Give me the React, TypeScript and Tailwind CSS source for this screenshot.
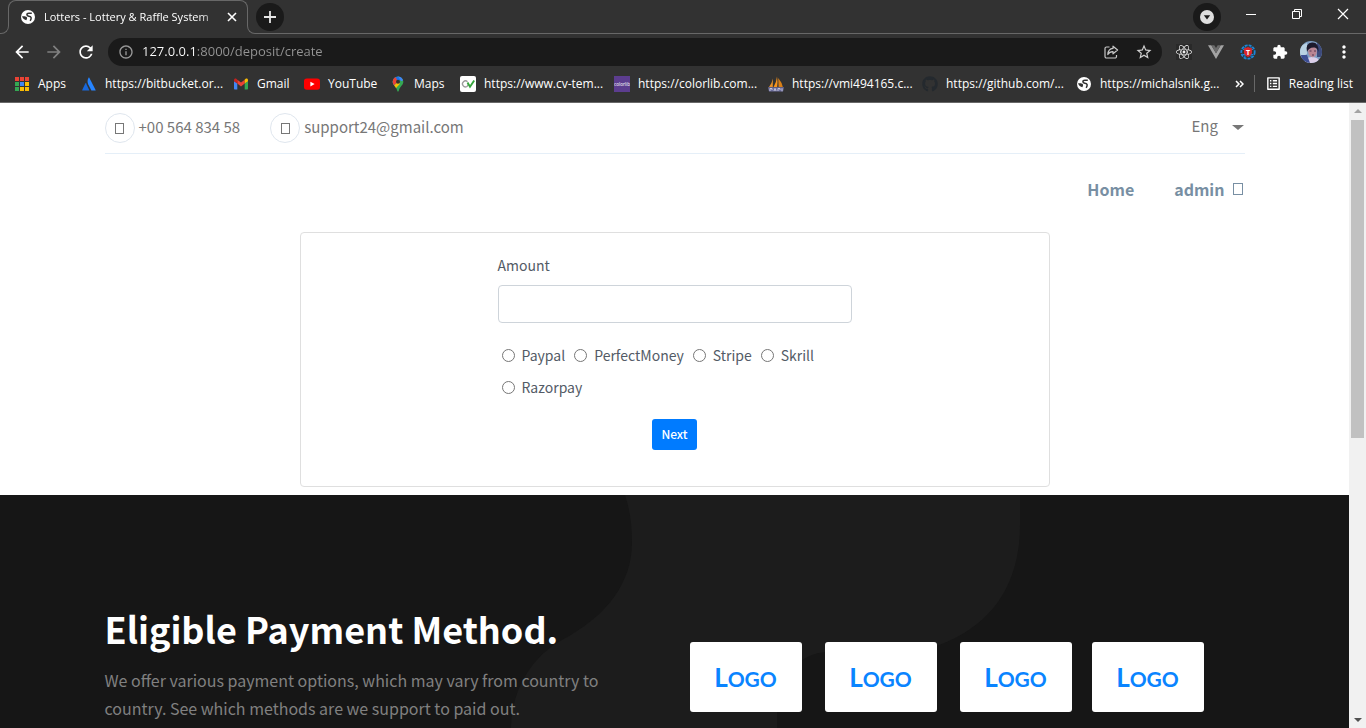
import type { ReactNode } from "react";
import {
  MdArrowBack,
  MdArrowForward,
  MdExtension,
  MdInfoOutline,
  MdListAlt,
  MdMoreVert,
  MdRefresh,
  MdStarBorder,
} from "react-icons/md";
import { FaGithub, FaReact } from "react-icons/fa";

function GlobeIcon() {
  return (
    <svg viewBox="0 0 16 16" className="size-4 shrink-0" aria-hidden="true">
      <circle cx="8" cy="8" r="7" fill="#fff" />
      <path
        d="M11.800 4.200H8.800C6.200 4.200 6.400 7 8.800 7.200S12 9 10.200 11.800"
        fill="none"
        stroke="#323232"
        strokeWidth="1.500"
      />
      <path d="M2 7.300H4.600C7.300 7.600 7.600 9 6.400 11.200 4.600 11 2.600 9.600 2 7.300Z" fill="#323232" />
    </svg>
  );
}

function AppsIcon() {
  const colors = ["#ea4335", "#ea4335", "#ea4335", "#34a853", "#4285f4", "#fbbc04", "#34a853", "#fbbc04", "#fbbc04"];
  return (
    <svg viewBox="0 0 16 16" className="size-4 shrink-0" aria-hidden="true">
      {colors.map((c, i) => (
        <rect key={i} x={1 + (i % 3) * 5} y={1 + Math.floor(i / 3) * 5} width="4" height="4" fill={c} />
      ))}
    </svg>
  );
}

function AtlassianIcon() {
  return (
    <svg viewBox="0 0 16 16" className="size-4 shrink-0" aria-hidden="true">
      <path d="M5 7.200 8.400 14.600H1.500Q1 14.600 1.200 14.100L4.300 7.400Q4.700 6.800 5 7.200Z" fill="#1868db" />
      <path d="M7.700 1.600Q8 1.200 8.300 1.700L14.600 14Q14.900 14.600 14.300 14.600H10.400L7.300 8.500Q5.600 5 7.700 1.600Z" fill="#2684ff" />
    </svg>
  );
}

function GmailIcon() {
  return (
    <svg viewBox="0 0 16 16" className="size-4 shrink-0" aria-hidden="true">
      <path d="M1 5v7.500c0 .6.4 1 1 1h2.300V7.500Z" fill="#4285f4" />
      <path d="M15 5v7.500c0 .6-.4 1-1 1h-2.300V7.500Z" fill="#34a853" />
      <path d="M4.300 3.700 8 6.500l3.700-2.800v3.900L8 10.400 4.300 7.600Z" fill="#ea4335" />
      <path d="M1 4.200c0-1.600 1.500-2 2.600-1.200l.7.700v3.900L1 5.200Z" fill="#c5221f" />
      <path d="M15 4.200c0-1.600-1.500-2-2.600-1.200l-.7.700v3.900L15 5.200Z" fill="#fbbc04" />
    </svg>
  );
}

function YouTubeIcon() {
  return (
    <svg viewBox="0 0 16 16" className="size-4 shrink-0" aria-hidden="true">
      <rect x="0" y="2.400" width="16" height="11.400" rx="2.800" fill="#f00" />
      <path d="M6.400 5.700v4.800L10.600 8.100Z" fill="#fff" />
    </svg>
  );
}

function MapsIcon() {
  return (
    <svg viewBox="0 0 16 16" className="size-4 shrink-0" aria-hidden="true">
      <defs>
        <clipPath id="pin">
          <path d="M8 .5a5.300 5.300 0 0 0-5.300 5.300c0 3.400 3.300 4.700 4.300 8.200.3 1 .6 1.700 1 1.700s.7-.7 1-1.700c1-3.500 4.300-4.800 4.300-8.200A5.300 5.300 0 0 0 8 .5Z" />
        </clipPath>
      </defs>
      <g clipPath="url(#pin)">
        <rect width="16" height="16" fill="#34a853" />
        <path d="M0 13 14 0H0Z" fill="#1a73e8" />
        <path d="M0 0h5L8 5.800 2 11Z" fill="#ea4335" />
        <path d="M2 11.500 8 5.800l2 2-5.500 6Z" fill="#fbbc04" />
        <path d="M8 0h8v3l-5 2.200Z" fill="#4285f4" />
      </g>
      <circle cx="8" cy="5.800" r="2" fill="#323232" />
    </svg>
  );
}

function CvIcon() {
  return (
    <svg viewBox="0 0 16 16" className="size-4 shrink-0" aria-hidden="true">
      <rect width="16" height="16" rx="2" fill="#fff" />
      <path d="M7.500 5.700A3 3 0 1 0 7 10.500L8.500 8" fill="none" stroke="#9a9a9a" strokeWidth="1.300" />
      <path d="M7.500 6.500 10 10.800 14.200 4.500" fill="none" stroke="#35a53c" strokeWidth="1.900" />
    </svg>
  );
}

function ColorlibIcon() {
  return (
    <svg viewBox="0 0 16 16" className="size-4 shrink-0" aria-hidden="true">
      <rect width="16" height="16" fill="#5c3d8f" />
      <text x="8" y="9.500" textAnchor="middle" fontSize="4.600" fontFamily="Open Sans, sans-serif" fill="#fff">
        colorlib
      </text>
    </svg>
  );
}

function SailIcon() {
  return (
    <svg viewBox="0 0 16 16" className="size-4 shrink-0" aria-hidden="true">
      <path d="M4.800 2.500V11H1Q4 7.500 4.800 2.500Z" fill="#e8922a" />
      <path d="M9 .5Q10 6 9.200 11H5.600Q8.500 6 9 .5Z" fill="#f7941d" />
      <path d="M10.200 2Q14 6.500 14.800 11H10.600Z" fill="#d97f16" />
      <path d="M0 11.300H16L15 15.500H1Z" fill="#6c6d9c" />
      <path d="M2 15v-2.500h2V14m2 1 1-2.700L8 15m2 0v-2.500h2V14m2-1.700v3" fill="none" stroke="#d4d4e4" strokeWidth=".8" />
    </svg>
  );
}

function ShareIcon() {
  return (
    <svg viewBox="0 0 16 16" className="size-4 shrink-0" aria-hidden="true" fill="none" stroke="#c9c9c9" strokeWidth="1.200" strokeLinejoin="round">
      <path d="M6.500 3H3.500A1.500 1.500 0 0 0 2 4.500v8A1.500 1.500 0 0 0 3.500 14h8.500a1.500 1.500 0 0 0 1.500-1.500V11" />
      <path d="M10 2.200 14.600 6 10 9.800V7.600C7.500 7.500 6 8.500 4.800 10.500 5 7.300 6.700 4.700 10 4.400Z" />
    </svg>
  );
}

function VueIcon() {
  return (
    <svg viewBox="0 0 16 16" className="size-4 shrink-0" aria-hidden="true">
      <path d="M0 1.200h3.300L8 9.300l4.700-8.100H16L8 15Z" fill="#a3a3a3" />
      <path d="M3.300 1.200h3L8 4l1.700-2.800h3L8 9.300Z" fill="#6b6b6b" />
    </svg>
  );
}

function TranslateIcon() {
  return (
    <svg viewBox="0 0 16 16" className="size-4 shrink-0" aria-hidden="true">
      <circle cx="8" cy="8" r="6.700" fill="none" stroke="#1b86d8" strokeWidth="1.800" strokeDasharray="3 1" />
      <path d="M3 5.500h10M3 10.500h10M5 3v10M11 3v10" stroke="#1b86d8" strokeWidth="1" />
      <path d="M4 4.500 8 3l4 1.500v4Q11.500 11.500 8 13 4.500 11.500 4 8.500Z" fill="#d9262c" />
      <text x="8" y="10.600" textAnchor="middle" fontSize="7" fontWeight="700" fontFamily="Open Sans, sans-serif" fill="#fff">
        T
      </text>
    </svg>
  );
}

function Avatar() {
  return (
    <svg viewBox="0 0 22 22" className="size-[22px] shrink-0" aria-hidden="true">
      <defs>
        <clipPath id="face">
          <circle cx="11" cy="11" r="11" />
        </clipPath>
      </defs>
      <g clipPath="url(#face)">
        <rect width="22" height="22" fill="#7f9fc4" />
        <path d="M0 5 7 2v11l-7 4Z" fill="#b8d1e2" />
        <path d="M17 2h5v14h-5Z" fill="#3d4a7c" />
        <path d="M4 22q1-6 8-6t8 6Z" fill="#dccfe8" />
        <path d="M1 14l6 0 3 8H2Z" fill="#3e4f94" />
        <ellipse cx="12.500" cy="10.500" rx="4.300" ry="5.800" fill="#b98593" />
        <path d="M7 11Q5 2 12 1.500T18.500 11q-1-4-4-4.500Q9 6 7 11Z" fill="#1d1a2d" />
        <path d="M9.500 10h2m2.500 0h2m-4 4h2" stroke="#472f4b" strokeWidth=".9" />
      </g>
    </svg>
  );
}

function Bookmark({ icon, label, width }: { icon: ReactNode; label: string; width: string }) {
  return (
    <a href="#" className={`flex shrink-0 items-center gap-2 whitespace-nowrap ${width}`}>
      {icon}
      <span>{label}</span>
    </a>
  );
}

const bookmarks: { icon: ReactNode; label: string; width: string }[] = [
  { icon: <AppsIcon />, label: "Apps", width: "w-[51px]" },
  { icon: <AtlassianIcon />, label: "https://bitbucket.or...", width: "w-[136px]" },
  { icon: <GmailIcon />, label: "Gmail", width: "w-[55px]" },
  { icon: <YouTubeIcon />, label: "YouTube", width: "w-[70px]" },
  { icon: <MapsIcon />, label: "Maps", width: "w-[54px]" },
  { icon: <CvIcon />, label: "https://www.cv-tem...", width: "w-[138px]" },
  { icon: <ColorlibIcon />, label: "https://colorlib.com...", width: "w-[138px]" },
  { icon: <SailIcon />, label: "https://vmi494165.c...", width: "w-[138px]" },
  { icon: <FaGithub className="size-4 shrink-0 text-[#24292e]" />, label: "https://github.com/...", width: "w-[138px]" },
  { icon: <GlobeIcon />, label: "https://michalsnik.g...", width: "w-[138px]" },
];

function TabStrip() {
  return (
    <div className="flex h-[34px] items-start">
      <div className="-mr-px h-2 w-[9px] self-end rounded-br-lg border-r border-b border-[#686868]" />
      <div className="flex h-[26px] w-60 items-center gap-2 rounded-t-lg border border-b-0 border-[#686868] pt-[7px] pr-[7px] pl-[11px]">
        <GlobeIcon />
        <span className="flex-1 text-[11px] whitespace-nowrap [mask-image:linear-gradient(to_right,#000_90%,#0006)]">
          Lotters - Lottery &amp; Raffle System
        </span>
        <button aria-label="Close tab" className="flex size-4 items-center justify-center">
          <svg viewBox="0 0 10 10" className="size-[10px]" aria-hidden="true">
            <path d="m1 1 8 8M9 1 1 9" stroke="#fff" strokeWidth="1.600" />
          </svg>
        </button>
      </div>
      <div className="-ml-px h-2 w-[9px] self-end rounded-bl-lg border-b border-l border-[#686868]" />
      <div className="flex h-full flex-1 items-center border-b border-[#686868]">
        <button aria-label="New tab" className="flex size-7 items-center justify-center rounded-full bg-[#1a1a1a]">
          <svg viewBox="0 0 12 12" className="size-3" aria-hidden="true">
            <path d="M6 0v12M0 6h12" stroke="#e6e6e6" strokeWidth="1.800" />
          </svg>
        </button>
        <button aria-label="Search tabs" className="mr-5 ml-auto flex size-7 items-center justify-center rounded-full bg-[#1a1a1a]">
          <svg viewBox="0 0 14 14" className="size-[14px]" aria-hidden="true">
            <circle cx="7" cy="7" r="7" fill="#dedede" />
            <path d="M3.800 5.200h6.400L7 9.600Z" fill="#1a1a1a" />
          </svg>
        </button>
        <div className="flex h-7 items-center pb-[5px]">
          <button aria-label="Minimize" className="flex w-[46px] items-center justify-start pl-1">
            <svg viewBox="0 0 12 12" className="size-3" aria-hidden="true">
              <path d="M1 6.500h10" stroke="#fff" />
            </svg>
          </button>
          <button aria-label="Restore" className="flex w-[46px] items-center justify-start pl-1">
            <svg viewBox="0 0 12 12" className="size-3" fill="none" stroke="#fff" aria-hidden="true">
              <path d="M1.500 3.500h7v7h-7ZM3.500 3.500v-2h7v7h-2" />
            </svg>
          </button>
          <button aria-label="Close" className="flex w-[33px] items-center justify-start pl-1">
            <svg viewBox="0 0 12 12" className="size-3" aria-hidden="true">
              <path d="m1 1 10 10M11 1 1 11" stroke="#fff" strokeWidth="1.200" />
            </svg>
          </button>
        </div>
      </div>
    </div>
  );
}

function Toolbar() {
  return (
    <div className="flex h-9 items-center pr-3 pl-3">
      <div className="flex w-24 items-center gap-3">
        <button aria-label="Back"><MdArrowBack className="size-5 text-white" /></button>
        <button aria-label="Forward"><MdArrowForward className="size-5 text-[#808080]" /></button>
        <button aria-label="Reload"><MdRefresh className="size-5 text-white" /></button>
      </div>
      <div className="flex h-7 flex-1 items-center rounded-full bg-[#1a1a1a] pr-[9px] pl-[10px]">
        <MdInfoOutline className="size-4 shrink-0 text-[#9a9a9a]" />
        <input
          aria-label="Address"
          defaultValue="127.0.0.1:8000/deposit/create"
          className="ml-2 min-w-0 flex-1 bg-[linear-gradient(90deg,#fff_55px,#959595_55px)] bg-clip-text text-[13px] text-transparent outline-none"
        />
        <button aria-label="Share" className="mr-4"><ShareIcon /></button>
        <button aria-label="Bookmark"><MdStarBorder className="size-[18px] text-[#d0d0d0]" /></button>
      </div>
      <div className="flex items-center gap-4 pl-[14px]">
        <FaReact className="size-4 bg-[#292929] text-[#f0f0f0]" />
        <VueIcon />
        <TranslateIcon />
        <MdExtension className="size-4 text-white" />
      </div>
      <div className="flex items-center gap-3 pl-3">
        <Avatar />
        <button aria-label="Menu"><MdMoreVert className="size-5 text-white" /></button>
      </div>
    </div>
  );
}

function BookmarkBar() {
  return (
    <nav className="flex h-[33px] items-center border-b border-[#686868] pr-[13px] pb-[5px] pl-[14px]">
      <div className="flex min-w-0 flex-1 items-center gap-4 overflow-hidden">
        {bookmarks.map((b) => (
          <Bookmark key={b.label} {...b} />
        ))}
      </div>
      <button aria-label="More bookmarks" className="mr-[10px]">
        <svg viewBox="0 0 9 8" className="h-2 w-[9px]" fill="none" stroke="#fff" strokeWidth="1.500" aria-hidden="true">
          <path d="m1 1 3 3-3 3M5 1l3 3-3 3" />
        </svg>
      </button>
      <a href="#" className="flex items-center gap-[7px] border-l border-[#686868] pl-[10px] whitespace-nowrap">
        <MdListAlt className="size-[17px]" />
        Reading list
      </a>
    </nav>
  );
}

function Glyph({ size }: { size: string }) {
  return <span aria-hidden="true" className={`inline-block border border-current ${size}`} />;
}

const methods = ["Paypal", "PerfectMoney", "Stripe", "Skrill", "Razorpay"];

function DepositForm() {
  return (
    <form className="mx-auto w-full max-w-[750px] rounded-[4px] border border-[#dfdfdf] px-5 pt-5 pb-9">
      <div className="mx-auto w-1/2 text-sm text-[#535b66]">
        <label htmlFor="amount" className="mb-2 block leading-6">Amount</label>
        <input id="amount" className="block h-[38px] w-full rounded-[4px] border border-[#ced4da] px-3 outline-none" />
        <div className="mt-4 flex flex-wrap gap-x-[9px] pl-1">
          {methods.map((m) => (
            <label key={m} className="flex items-center gap-[7px] leading-8">
              <input type="radio" name="method" value={m} className="size-[13px]" />
              {m}
            </label>
          ))}
        </div>
        <button type="button" className="mx-auto mt-4 block h-[31px] rounded-[3px] bg-[#007bff] px-[9px] pb-[2px] text-xs font-medium text-white">
          Next
        </button>
      </div>
    </form>
  );
}

function LogoCard() {
  return (
    <div className="flex h-[70px] w-28 items-center justify-center rounded-[3px] bg-white font-[Lato] text-[26px] font-bold text-[#0a84ff]">
      <span>L<span className="text-[21px]">OGO</span></span>
    </div>
  );
}

function PaymentSection() {
  return (
    <section className="relative mt-2 flex-1 bg-[#161616]">
      <svg viewBox="0 0 1349 233" preserveAspectRatio="xMidYMin slice" className="absolute inset-0 h-full w-full" aria-hidden="true">
        <path
          d="M625 0C630 15 632 30 632 47C632 88 607 121 562 145C535 160 512 190 511 233H777V215C779 192 787 175 801 166C815 156 830 156 850 157C890 158 915 158 939 150C993 130 1020 88 1020 30V0Z"
          fill="#1c1c1c"
        />
      </svg>
      <div className="relative mx-auto flex max-w-[1140px] pt-[105px]">
        <div className="w-[585px] pr-12">
          <h2 className="text-4xl leading-[56px] font-bold text-white">Eligible Payment Method.</h2>
          <p className="mt-[10px] text-base leading-7 text-[#808080]">
            We offer various payment options, which may vary from country to country. See which methods are we support to paid out.
          </p>
        </div>
        <div className="flex gap-5 pt-[42px]">
          <div className="flex gap-[23px]">
            <LogoCard />
            <LogoCard />
            <LogoCard />
          </div>
          <LogoCard />
        </div>
      </div>
    </section>
  );
}

function Page() {
  return (
    <main className="flex min-w-0 flex-1 flex-col overflow-hidden bg-white font-['Noto_Sans_CJK_SC',sans-serif]">
      <div className="mx-auto flex w-full max-w-[1140px] items-center border-b border-[#e5eff8] py-[10px] text-[15px] leading-5 text-[#777]">
        <a href="#" className="flex items-center gap-1">
          <span className="flex size-[30px] items-center justify-center rounded-full border border-[#dfe6ee]"><Glyph size="h-[11px] w-[9px]" /></span>
          <span className="pb-[2px]">+00 564 834 58</span>
        </a>
        <a href="#" className="ml-[30px] flex items-center gap-1">
          <span className="flex size-[30px] items-center justify-center rounded-full border border-[#dfe6ee]"><Glyph size="h-[11px] w-[9px]" /></span>
          <span className="pb-[2px]">support24@gmail.com</span>
        </a>
        <div className="relative ml-auto flex items-center pb-[5px]">
          <select aria-label="Language" className="w-[53px] appearance-none bg-transparent outline-none">
            <option>Eng</option>
          </select>
          <span className="pointer-events-none absolute right-px mt-[3px] border-x-[6px] border-t-[5px] border-x-transparent border-t-[#777]" />
        </div>
      </div>
      <nav className="mx-auto flex h-[78px] w-full max-w-[1140px] items-center justify-end gap-10 pr-[2px] pb-2 text-base font-semibold text-[#788fa3]">
        <a href="#">Home</a>
        <a href="#" className="flex items-center gap-2">
          admin
          <Glyph size="h-3 w-[10px]" />
        </a>
      </nav>
      <DepositForm />
      <PaymentSection />
    </main>
  );
}

function Scrollbar() {
  return (
    <div className="flex w-[17px] flex-col items-center justify-between bg-[#f1f1f1] py-[6px]">
      <span className="border-x-4 border-b-4 border-x-transparent border-b-[#a3a3a3]" />
      <span className="mt-[7px] w-[13px] basis-[318px] bg-[#c1c1c1]" />
      <span className="mt-auto border-x-4 border-t-4 border-x-transparent border-t-[#505050]" />
    </div>
  );
}

export default function App() {
  return (
    <div className="flex h-screen flex-col overflow-hidden font-['Open_Sans',sans-serif]">
      <header className="bg-[#323232] text-xs text-white">
        <TabStrip />
        <Toolbar />
        <BookmarkBar />
      </header>
      <div className="flex min-h-0 flex-1">
        <Page />
        <Scrollbar />
      </div>
    </div>
  );
}
